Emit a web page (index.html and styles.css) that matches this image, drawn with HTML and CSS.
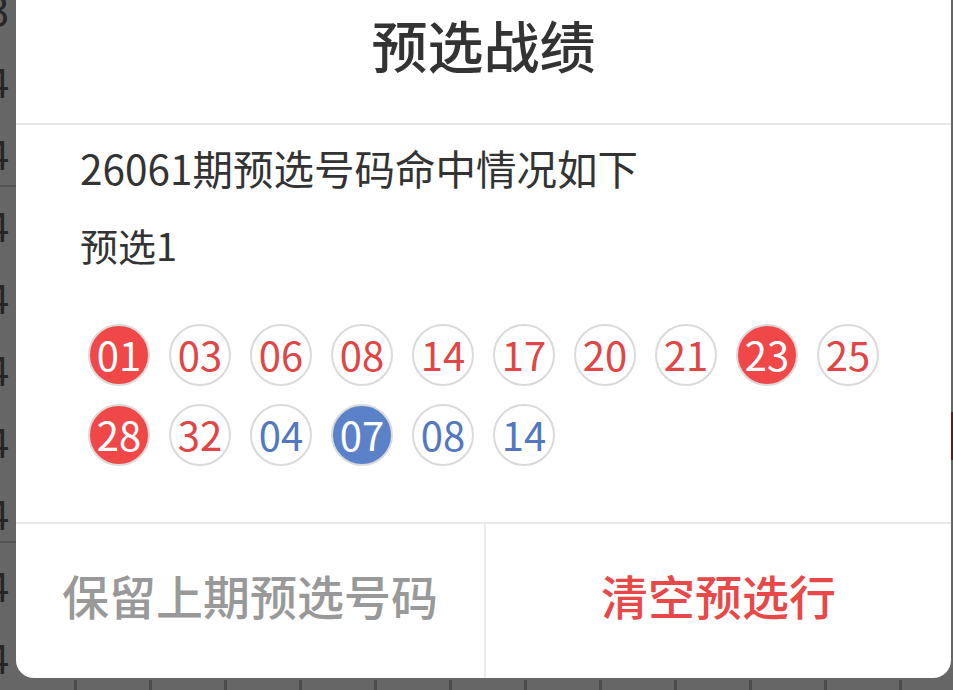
FILE: index.html
```html
<!DOCTYPE html>
<html lang="zh-CN">
<head>
<meta charset="utf-8">
<title>预选战绩</title>
<link rel="stylesheet" href="styles.css">
</head>
<body>
<div class="bg">
  <div class="bg-main">
    <div class="bg-left">
      <div class="bg-row"><span class="bg-glyph">3</span></div>
      <div class="bg-row"><span class="bg-glyph">4</span></div>
      <div class="bg-row"><span class="bg-glyph">4</span></div>
      <div class="bg-row"><span class="bg-glyph">4</span></div>
      <div class="bg-row"><span class="bg-glyph">4</span></div>
      <div class="bg-row"><span class="bg-glyph">4</span></div>
      <div class="bg-row"><span class="bg-glyph">4</span></div>
      <div class="bg-row"><span class="bg-glyph">4</span></div>
      <div class="bg-row"><span class="bg-glyph">4</span></div>
      <div class="bg-row"><span class="bg-glyph">4</span></div>
    </div>
    <div class="bg-mid"></div>
    <div class="bg-right"><div class="bg-mark"></div></div>
  </div>
  <div class="bg-bottom">
    <div class="bg-cell first"></div>
    <div class="bg-cell"></div><div class="bg-cell"></div><div class="bg-cell"></div>
    <div class="bg-cell"></div><div class="bg-cell"></div><div class="bg-cell"></div>
    <div class="bg-cell"></div><div class="bg-cell"></div><div class="bg-cell"></div>
    <div class="bg-cell"></div><div class="bg-cell"></div><div class="bg-cell"></div>
  </div>
</div>

<div class="dialog">
  <div class="dialog-header">预选战绩</div>
  <div class="dialog-body">
    <div class="summary">26061期预选号码命中情况如下</div>
    <div class="group-title">预选1</div>
    <div class="balls">
      <div class="ball red hit">01</div>
      <div class="ball red">03</div>
      <div class="ball red">06</div>
      <div class="ball red">08</div>
      <div class="ball red">14</div>
      <div class="ball red">17</div>
      <div class="ball red">20</div>
      <div class="ball red">21</div>
      <div class="ball red hit">23</div>
      <div class="ball red">25</div>
      <div class="ball red hit">28</div>
      <div class="ball red">32</div>
      <div class="ball blue">04</div>
      <div class="ball blue hit">07</div>
      <div class="ball blue">08</div>
      <div class="ball blue">14</div>
    </div>
  </div>
  <div class="dialog-footer">
    <div class="btn btn-keep">保留上期预选号码</div>
    <div class="btn btn-clear">清空预选行</div>
  </div>
</div>
</body>
</html>
```

FILE: styles.css
```css
html, body {
  margin: 0;
  padding: 0;
}

body {
  width: 953px;
  height: 690px;
  overflow: hidden;
  position: relative;
  background: #666666;
  font-family: "Noto Sans CJK SC", "Noto Sans", sans-serif;
}

/* ---------- dimmed page behind the dialog ---------- */
.bg {
  display: flex;
  flex-direction: column;
  width: 953px;
  height: 690px;
}

.bg-main {
  display: flex;
  height: 680px;
}

.bg-left {
  width: 16px;
  overflow: hidden;
  display: flex;
  flex-direction: column;
  background-image:
    linear-gradient(#555555, #555555),
    linear-gradient(#555555, #555555);
  background-repeat: no-repeat;
  background-size: 100% 2px, 100% 2px;
  background-position: 0 185px, 0 541px;
}

.bg-row {
  flex: 0 0 72px;
  display: flex;
  align-items: center;
}

.bg-row:first-child {
  margin-top: -27px;
}

.bg-glyph {
  margin-left: -13px;
  font-size: 40px;
  line-height: 1;
  color: #262626;
}

.bg-mid {
  flex: 1;
}

.bg-right {
  width: 2px;
  padding-top: 412px;
}

.bg-mark {
  height: 48px;
  background: #5a1e1e;
}

.bg-bottom {
  display: flex;
  height: 10px;
}

.bg-cell {
  flex: 0 0 72px;
  border-left: 3px solid #4c4c4c;
}

.bg-cell.first {
  flex-basis: 74px;
  border-left: 0;
}

/* ---------- dialog ---------- */
.dialog {
  position: absolute;
  left: 16px;
  top: 0;
  width: 935px;
  height: 678px;
  background: #ffffff;
  border-radius: 0 0 18px 18px;
  overflow: hidden;
  display: flex;
  flex-direction: column;
}

.dialog-header {
  flex: 0 0 125px;
  box-sizing: border-box;
  border-bottom: 2px solid #e8e8e8;
  padding-bottom: 36px;
  display: flex;
  align-items: center;
  justify-content: center;
  font-size: 56px;
  font-weight: 500;
  color: #333333;
}

.dialog-body {
  flex: 1;
  padding: 18px 0 0 64px;
  color: #333333;
}

.summary {
  font-size: 40.5px;
  line-height: 50px;
}

.group-title {
  margin-top: 29px;
  font-size: 38px;
  line-height: 46px;
}

.balls {
  margin-top: 56px;
  padding-left: 8px;
  display: grid;
  grid-template-columns: repeat(10, 62px);
  column-gap: 19px;
  row-gap: 18px;
}

.ball {
  width: 62px;
  height: 62px;
  box-sizing: border-box;
  border: 2px solid #dadada;
  border-radius: 50%;
  display: flex;
  align-items: center;
  justify-content: center;
  font-size: 40px;
  line-height: 1;
  padding-bottom: 3px;
}

.ball.red {
  color: #e04646;
}

.ball.blue {
  color: #5279c0;
}

.ball.red.hit {
  background: #f04848;
  color: #ffffff;
}

.ball.blue.hit {
  background: #5b82c9;
  color: #ffffff;
}

.dialog-footer {
  flex: 0 0 156px;
  box-sizing: border-box;
  border-top: 2px solid #e8e8e8;
  display: grid;
  grid-template-columns: 470px 1fr;
}

.btn {
  display: flex;
  align-items: center;
  justify-content: center;
  font-size: 47px;
  font-weight: 500;
  padding-bottom: 14px;
}

.btn-keep {
  color: #999999;
  border-right: 2px solid #ececec;
}

.btn-clear {
  color: #e84848;
}
```
